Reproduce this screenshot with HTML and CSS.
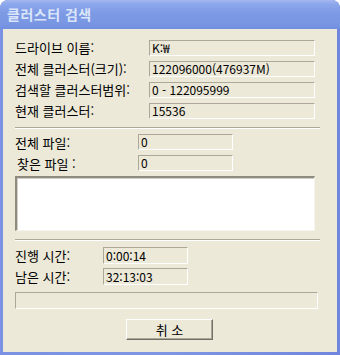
FILE: index.html
```html
<!DOCTYPE html>
<html lang="ko">
<head>
  <meta charset="UTF-8">
  <title>클러스터 검색</title>
  <link rel="stylesheet" href="styles.css">
</head>
<body>
  <div class="window">
    <div class="titlebar">클러스터 검색</div>
    <div class="client">
      <div class="info-grid">
        <span class="label">드라이브 이름:</span><span class="field">K:₩</span>
        <span class="label">전체 클러스터(크기):</span><span class="field">122096000(476937M)</span>
        <span class="label">검색할 클러스터범위:</span><span class="field">0 - 122095999</span>
        <span class="label">현재 클러스터:</span><span class="field">15536</span>
      </div>

      <div class="separator sep-top"></div>

      <div class="file-grid">
        <span class="label">전체 파일:</span><span class="field">0</span>
        <span class="label indent">찾은 파일 :</span><span class="field">0</span>
      </div>

      <div class="listbox"></div>

      <div class="separator sep-mid"></div>

      <div class="time-grid">
        <span class="label">진행 시간:</span><span class="field">0:00:14</span>
        <span class="label">남은 시간:</span><span class="field">32:13:03</span>
      </div>

      <div class="progress"></div>

      <div class="actions">
        <button class="btn">취 소</button>
      </div>
    </div>
  </div>
</body>
</html>
```

FILE: styles.css
```css
body {
  margin: 0;
  background-color: #ffffff;
  font-family: "Noto Sans CJK KR", "DejaVu Sans", sans-serif;
  font-size: 13px;
  color: #000000;
}
.window {
  width: 340px;
  height: 355px;
  box-sizing: border-box;
  padding-bottom: 3px;
  border-radius: 8px 8px 0 0;
  background: linear-gradient(to right, #7b92e4, #7d95e2 50%, #7085dd);
  overflow: hidden;
}
.titlebar {
  height: 29px;
  padding-left: 7px;
  line-height: 29px;
  font-size: 14px;
  font-weight: bold;
  letter-spacing: 0.5px;
  color: #dbe5fa;
  background: linear-gradient(to bottom, #a4b8f0 0, #8da7ec 4px, #7c99e4 14px, #7a97e3 22px, #7190e0 29px);
  border-radius: 8px 8px 0 0;
}
.client {
  margin: 0 3px;
  height: 323px;
  background-color: #ece9d8;
  display: flex;
  flex-direction: column;
  padding-left: 12px;
  box-sizing: border-box;
}
.label {
  white-space: nowrap;
  line-height: 15px;
}
.indent {
  padding-left: 2px;
}
.field {
  box-sizing: border-box;
  border-top: 1px solid #aca899;
  border-left: 1px solid #aca899;
  border-right: 1px solid #ffffff;
  border-bottom: 1px solid #ffffff;
  padding-left: 2px;
  font-size: 12px;
  line-height: 14px;
  white-space: nowrap;
  overflow: hidden;
}
.info-grid {
  margin-top: 11px;
  display: grid;
  grid-template-columns: 134px 166px;
  grid-auto-rows: 15px;
  row-gap: 6px;
  align-items: center;
}
.info-grid .field {
  height: 16px;
}
.separator {
  width: 305px;
  height: 0;
  border-top: 1px solid #aca899;
  border-bottom: 1px solid #ffffff;
}
.sep-top {
  margin-top: 9px;
}
.file-grid {
  margin-top: 5px;
  display: grid;
  grid-template-columns: 123px 95px;
  grid-auto-rows: 16px;
  row-gap: 5px;
  align-items: center;
}
.file-grid .field {
  height: 16px;
}
.listbox {
  margin-top: 5px;
  width: 300px;
  height: 55px;
  box-sizing: border-box;
  background-color: #ffffff;
  border-top: 2px solid #8e8b7f;
  border-left: 2px solid #8e8b7f;
  border-right: 1px solid #f5f4ee;
  border-bottom: 1px solid #f5f4ee;
  box-shadow: inset 1px 1px 0 #d4d0c8;
}
.sep-mid {
  margin-top: 8px;
}
.time-grid {
  margin-top: 6px;
  display: grid;
  grid-template-columns: 88px 85px;
  grid-auto-rows: 17px;
  row-gap: 4px;
  align-items: center;
}
.time-grid .field {
  height: 17px;
  line-height: 15px;
}
.progress {
  margin-top: 7px;
  width: 303px;
  height: 17px;
  box-sizing: border-box;
  border-top: 1px solid #aca899;
  border-left: 1px solid #aca899;
  border-right: 1px solid #ffffff;
  border-bottom: 1px solid #ffffff;
}
.actions {
  margin-top: 10px;
  padding-left: 111px;
}
.btn {
  width: 87px;
  height: 21px;
  padding: 0;
  font-family: inherit;
  font-size: 13px;
  color: #000000;
  background-color: #ece9d8;
  border-top: 1px solid #ffffff;
  border-left: 1px solid #ffffff;
  border-right: 1px solid #716f64;
  border-bottom: 1px solid #716f64;
  box-shadow: inset -1px -1px 0 #aca899;
}
```
